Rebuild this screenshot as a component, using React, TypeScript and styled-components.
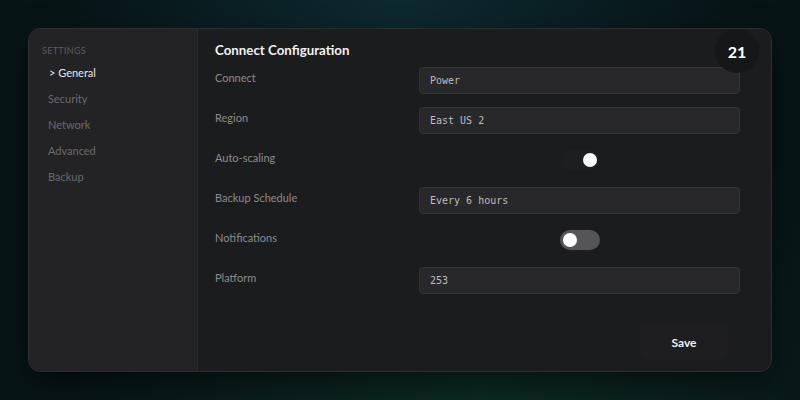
import React from "react";
import styled, { createGlobalStyle } from "styled-components";

const Global = createGlobalStyle`
  html, body { margin: 0; padding: 0; }
  body {
    width: 800px;
    height: 400px;
    overflow: hidden;
    font-family: "Lato", "Noto Sans", sans-serif;
    background:
      radial-gradient(ellipse at 50% 0%, #0d2a30 0%, rgba(13,42,48,0) 60%),
      radial-gradient(ellipse at 60% 100%, #0c2a22 0%, rgba(12,42,34,0) 60%),
      #071416;
  }
`;

const Page = styled.div`
  box-sizing: border-box;
  width: 800px;
  height: 400px;
  padding: 28px;
`;

const Card = styled.div`
  position: relative;
  display: flex;
  height: 344px;
  border-radius: 12px;
  overflow: hidden;
  border: 1px solid #2a2f30;
  box-sizing: border-box;
  box-shadow: 0 10px 30px rgba(0, 0, 0, 0.5);
`;

const Sidebar = styled.nav`
  width: 168px;
  flex: none;
  background: #232325;
  padding: 16px 13px;
  box-sizing: border-box;
  display: flex;
  flex-direction: column;
`;

const SideHeading = styled.div`
  font-size: 9px;
  color: #5c5c5e;
  letter-spacing: 0.3px;
  line-height: 12px;
  margin-bottom: 3px;
`;

const NavItem = styled.div<{ $active?: boolean }>`
  font-size: 11px;
  line-height: 26px;
  padding-left: ${(p) => (p.$active ? "7px" : "6px")};
  color: ${(p) => (p.$active ? "#e6e6e6" : "#6a6a6c")};
`;

const Main = styled.main`
  flex: 1;
  background: #1b1c1d;
  border-left: 1px solid #2b2b2d;
  padding: 11px 31px 11px 17px;
  display: flex;
  flex-direction: column;
`;

const Title = styled.h1`
  margin: 0;
  font-size: 13.3px;
  font-weight: 700;
  color: #f2f2f2;
  line-height: 20px;
`;

const Row = styled.div`
  display: grid;
  grid-template-columns: 204px 1fr;
  align-items: center;
  height: 40px;
`;

const Label = styled.div`
  font-size: 11px;
  color: #8c8c8e;
  margin-top: -5px;
`;

const Input = styled.div`
  height: 27px;
  box-sizing: border-box;
  background: #28282a;
  border: 1px solid #343436;
  border-radius: 4px;
  padding: 0 10px;
  display: flex;
  align-items: center;
  font-family: "DejaVu Sans Mono", "Liberation Mono", monospace;
  font-size: 10px;
  color: #bdbdbd;
`;

const ToggleCell = styled.div`
  display: flex;
  justify-content: center;
`;

const Track = styled.div<{ $on?: boolean }>`
  width: 40px;
  height: 20px;
  border-radius: 10px;
  background: ${(p) => (p.$on ? "#1d1e20" : "#555557")};
  position: relative;
`;

const Knob = styled.div<{ $on?: boolean }>`
  position: absolute;
  top: 3px;
  left: ${(p) => (p.$on ? "23px" : "3px")};
  width: 14px;
  height: 14px;
  border-radius: 50%;
  background: #ffffff;
`;

const Footer = styled.div`
  margin-top: auto;
  display: flex;
  justify-content: flex-end;
  padding-right: 12px;
`;

const SaveButton = styled.button`
  width: 88px;
  height: 36px;
  border: none;
  border-radius: 6px;
  background: #1e1e20;
  color: #f0f0f0;
  font-family: "Lato", "Noto Sans", sans-serif;
  font-size: 12px;
  font-weight: 700;
`;

const Badge = styled.div`
  position: absolute;
  top: 0;
  right: 12px;
  width: 44px;
  height: 44px;
  border-radius: 50%;
  background: #161718;
  color: #ffffff;
  font-size: 16px;
  font-weight: 700;
  display: flex;
  align-items: center;
  justify-content: center;
`;

const fields: { label: string; value?: string; toggle?: boolean }[] = [
  { label: "Connect", value: "Power" },
  { label: "Region", value: "East US 2" },
  { label: "Auto-scaling", toggle: true },
  { label: "Backup Schedule", value: "Every 6 hours" },
  { label: "Notifications", toggle: false },
  { label: "Platform", value: "253" },
];

const navItems = ["Security", "Network", "Advanced", "Backup"];

export default function App() {
  return (
    <>
      <Global />
      <Page>
        <Card>
          <Sidebar>
            <SideHeading>SETTINGS</SideHeading>
            <NavItem $active>&gt; General</NavItem>
            {navItems.map((n) => (
              <NavItem key={n}>{n}</NavItem>
            ))}
          </Sidebar>
          <Main>
            <Title>Connect Configuration</Title>
            {fields.map((f) => (
              <Row key={f.label}>
                <Label>{f.label}</Label>
                {f.value !== undefined ? (
                  <Input>{f.value}</Input>
                ) : (
                  <ToggleCell>
                    <Track $on={f.toggle}>
                      <Knob $on={f.toggle} />
                    </Track>
                  </ToggleCell>
                )}
              </Row>
            ))}
            <Footer>
              <SaveButton>Save</SaveButton>
            </Footer>
          </Main>
          <Badge>21</Badge>
        </Card>
      </Page>
    </>
  );
}
